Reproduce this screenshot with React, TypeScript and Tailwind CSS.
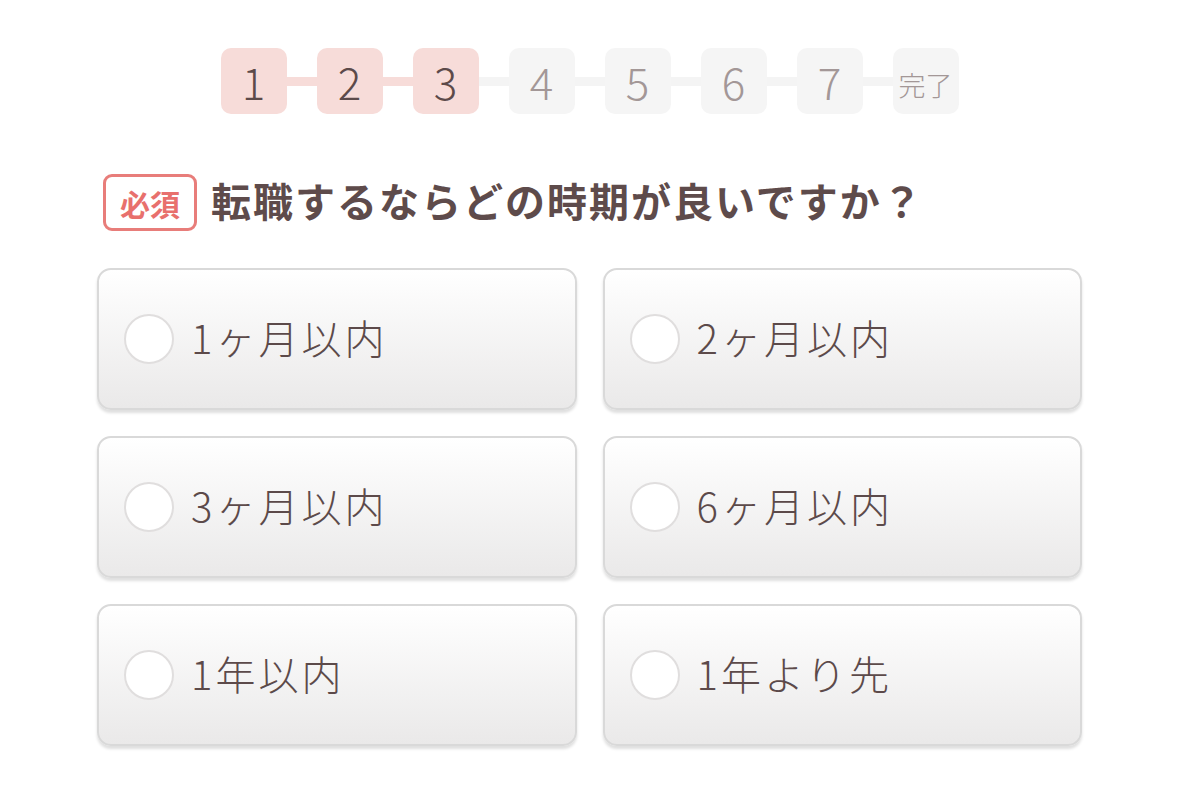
import { useState } from "react";

const steps = ["1", "2", "3", "4", "5", "6", "7", "完了"];
const current = 3;

const options = [
  "1ヶ月以内",
  "2ヶ月以内",
  "3ヶ月以内",
  "6ヶ月以内",
  "1年以内",
  "1年より先",
];

function StepBar() {
  return (
    <div className="flex items-center justify-center">
      {steps.map((label, i) => {
        const done = i < current;
        const isLast = i === steps.length - 1;
        return (
          <div key={label} className="flex items-center">
            <div
              className={`flex h-[66px] w-[66px] items-center justify-center rounded-[10px] ${
                done ? "bg-[#f7dcd9] text-[#5c4a4a]" : "bg-[#f5f5f5] text-[#a39797]"
              }`}
            >
              <span className={isLast ? "mt-[8px] text-[27px] font-light" : "text-[44px] font-light leading-none"}>
                {label}
              </span>
            </div>
            {!isLast && (
              <div className={`h-[9px] w-[30px] ${i < current - 1 ? "bg-[#f7dcd9]" : "bg-[#f4f4f4]"}`} />
            )}
          </div>
        );
      })}
    </div>
  );
}

function Option({ label, checked, onSelect }: { label: string; checked: boolean; onSelect: () => void }) {
  return (
    <button
      type="button"
      onClick={onSelect}
      className="flex h-[142px] items-center rounded-[14px] border-2 border-[#d9d9d9] bg-gradient-to-b from-[#ffffff] to-[#eae9e9] pl-[25px] text-left shadow-[0_3px_3px_rgba(0,0,0,0.13)]"
    >
      <span className="flex h-[50px] w-[50px] shrink-0 items-center justify-center rounded-full border-2 border-[#e0dede] bg-white">
        {checked && <span className="h-[22px] w-[22px] rounded-full bg-[#e8706d]" />}
      </span>
      <span className="ml-[17px] mb-[4px] text-[40px] font-light tracking-[3px] text-[#5c4a4a]">{label}</span>
    </button>
  );
}

export default function App() {
  const [selected, setSelected] = useState<number | null>(null);

  return (
    <div
      className="min-h-screen bg-white pt-[48px]"
      style={{ fontFamily: '"Noto Sans CJK JP", "Noto Sans", sans-serif' }}
    >
      <StepBar />

      <div className="mx-auto mt-[60px] w-[985px]">
        <div className="flex items-center pl-[6px]">
          <span className="flex h-[57px] w-[94px] items-center justify-center rounded-[9px] border-[3px] border-[#e87d7a] text-[30px] font-bold leading-none text-[#e8706d]">
            必須
          </span>
          <h2 className="mb-[6px] ml-[14px] text-[40px] font-bold leading-none tracking-[2px] text-[#5e4b4b]">
            転職するならどの時期が良いですか？
          </h2>
        </div>

        <div className="mt-[37px] grid grid-cols-2 gap-[26px]">
          {options.map((opt, i) => (
            <Option key={opt} label={opt} checked={selected === i} onSelect={() => setSelected(i)} />
          ))}
        </div>
      </div>
    </div>
  );
}
